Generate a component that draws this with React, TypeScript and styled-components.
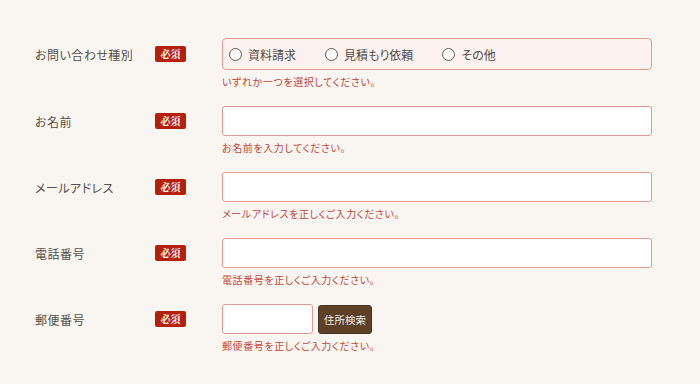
import React from "react";
import styled, { createGlobalStyle } from "styled-components";

const GlobalStyle = createGlobalStyle`
  html, body { margin: 0; padding: 0; }
  body {
    background: #f9f6f2;
    font-family: "Noto Sans CJK JP", "Noto Sans", sans-serif;
    width: 700px;
    height: 384px;
    overflow: hidden;
  }
`;

const Form = styled.form`
  display: flex;
  flex-direction: column;
  gap: 16px;
  padding: 38px 0 0 35px;
`;

const Row = styled.div`
  display: flex;
  align-items: flex-start;
`;

const Head = styled.div<{ $h: number }>`
  display: flex;
  align-items: center;
  width: 187px;
  height: ${(p) => p.$h}px;
`;

const Label = styled.span`
  width: 120px;
  font-size: 12px;
  color: #555049;
  font-feature-settings: "palt";
  letter-spacing: 0.04em;
`;

const Badge = styled.span`
  display: inline-flex;
  align-items: center;
  justify-content: center;
  width: 31px;
  height: 16px;
  margin-top: -1px;
  background: #b5200d;
  color: #fff;
  border-radius: 2px;
  font-family: "Liberation Serif", "Noto Serif CJK JP", serif;
  font-weight: bold;
  font-size: 10px;
`;

const Field = styled.div`
  display: flex;
  flex-direction: column;
`;

const RadioBox = styled.div`
  box-sizing: border-box;
  width: 430px;
  height: 32px;
  display: flex;
  align-items: center;
  gap: 29px;
  padding-left: 6px;
  background: #fdf2ef;
  border: 1px solid #e39a8f;
  border-radius: 4px;
`;

const RadioItem = styled.label`
  display: flex;
  align-items: center;
  gap: 6px;
  font-size: 12px;
  color: #4f4a44;
  font-feature-settings: "palt";
`;

const Circle = styled.span`
  box-sizing: border-box;
  width: 13px;
  height: 13px;
  border: 1.5px solid #62574e;
  border-radius: 50%;
  background: #fff;
`;

const Input = styled.input<{ $w: number }>`
  box-sizing: border-box;
  width: ${(p) => p.$w}px;
  height: 30px;
  background: #fff;
  border: 1px solid #e39a8f;
  border-radius: 3px;
  outline: none;
  margin: 0;
`;

const InputLine = styled.div`
  display: flex;
  align-items: center;
  gap: 5px;
`;

const Button = styled.button`
  box-sizing: border-box;
  width: 54px;
  height: 29px;
  margin: 0;
  padding: 0;
  background: #5c4128;
  border: 1px solid #4a331f;
  border-radius: 3px;
  color: #f1ebe4;
  font-family: "Noto Sans CJK JP", sans-serif;
  font-size: 10.5px;
  font-feature-settings: "palt";
`;

const Error = styled.p`
  margin: 4px 0 0;
  font-size: 10px;
  line-height: 16px;
  color: #c5463a;
  font-feature-settings: "palt";
  letter-spacing: 0.06em;
`;

const rows = [
  { label: "お名前", error: "お名前を入力してください。" },
  { label: "メールアドレス", error: "メールアドレスを正しくご入力ください。" },
  { label: "電話番号", error: "電話番号を正しくご入力ください。" },
];

export default function App() {
  return (
    <>
      <GlobalStyle />
      <Form>
        <Row>
          <Head $h={32}>
            <Label>お問い合わせ種別</Label>
            <Badge>必須</Badge>
          </Head>
          <Field>
            <RadioBox>
              {["資料請求", "見積もり依頼", "その他"].map((t) => (
                <RadioItem key={t}>
                  <Circle />
                  {t}
                </RadioItem>
              ))}
            </RadioBox>
            <Error>いずれか一つを選択してください。</Error>
          </Field>
        </Row>
        {rows.map((r) => (
          <Row key={r.label}>
            <Head $h={30}>
              <Label>{r.label}</Label>
              <Badge>必須</Badge>
            </Head>
            <Field>
              <Input $w={430} />
              <Error>{r.error}</Error>
            </Field>
          </Row>
        ))}
        <Row>
          <Head $h={30}>
            <Label>郵便番号</Label>
            <Badge>必須</Badge>
          </Head>
          <Field>
            <InputLine>
              <Input $w={91} />
              <Button type="button">住所検索</Button>
            </InputLine>
            <Error>郵便番号を正しくご入力ください。</Error>
          </Field>
        </Row>
      </Form>
    </>
  );
}
